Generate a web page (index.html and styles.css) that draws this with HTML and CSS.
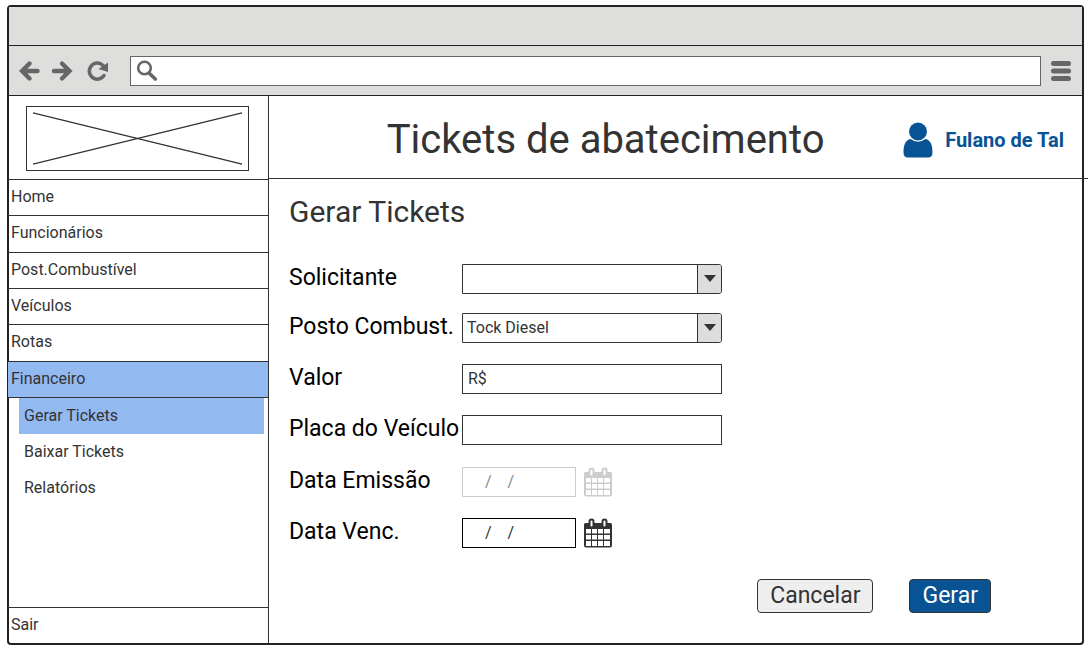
FILE: index.html
```html
<!DOCTYPE html>
<html lang="pt-BR">
<head>
<meta charset="utf-8">
<meta name="viewport" content="width=device-width, initial-scale=1">
<title>Tickets de abatecimento</title>
<link rel="stylesheet" href="styles.css">
</head>
<body>
<svg class="sprite" aria-hidden="true">
  <symbol id="calendar" viewBox="0 0 30 32">
    <path fill="currentColor" fill-rule="evenodd" d="M2.500 6H5.500V4.500a3 3 0 0 1 6 0V6h7V4.500a3 3 0 0 1 6 0V6h3A1.500 1.500 0 0 1 29 7.500v21a2 2 0 0 1-2 2H3a2 2 0 0 1-2-2v-21A1.500 1.500 0 0 1 2.500 6z"/>
    <path fill="#fff" d="M3 12h5v4.500H3zM9 12h5v4.500H9zM15 12h5v4.500h-5zM21 12h6v4.500h-6zM3 18h5v4.500H3zM9 18h5v4.500H9zM15 18h5v4.500h-5zM21 18h6v4.500h-6zM3 24h5v5H3zM9 24h5v5H9zM15 24h5v5h-5zM21 24h6v5h-6z"/>
    <path fill="none" stroke="#fff" stroke-width="2" stroke-linecap="round" d="M8.500 4.500v4M21.500 4.500v4"/>
  </symbol>
  <symbol id="caret" viewBox="0 0 12 8">
    <path fill="#333" d="M0 0h12L6 7z"/>
  </symbol>
</svg>

<div class="window">
  <div class="titlebar"></div>
  <div class="toolbar">
    <div class="history">
      <button class="tool" type="button" aria-label="Voltar">
        <svg width="22" height="22" viewBox="0 0 22 22"><path d="M18.500 11H4M10.500 3.500L3 11l7.500 7.500" fill="none" stroke="#666" stroke-width="4.400" stroke-linecap="round"/></svg>
      </button>
      <button class="tool" type="button" aria-label="Avançar">
        <svg width="22" height="22" viewBox="0 0 22 22"><path d="M3 11h14.500M11 3.500l7.500 7.500-7.500 7.500" fill="none" stroke="#666" stroke-width="4.400" stroke-linecap="round"/></svg>
      </button>
      <button class="tool tool-reload" type="button" aria-label="Recarregar">
        <svg width="22" height="22" viewBox="0 0 22 22"><path d="M17 15.500A8 8 0 1 1 16 5.500" fill="none" stroke="#666" stroke-width="3.500" stroke-linecap="round"/><path d="M21 2.500v9.500l-9.500-3z" fill="#666"/></svg>
      </button>
    </div>
    <label class="address">
      <svg width="22" height="22" viewBox="0 0 22 22"><circle cx="8.500" cy="8" r="6.300" fill="none" stroke="#666" stroke-width="2.600"/><path d="M13 13l6.300 6" stroke="#666" stroke-width="3.600" stroke-linecap="round"/></svg>
      <input class="address-input" type="text" aria-label="Endereço">
    </label>
    <button class="tool" type="button" aria-label="Menu">
      <svg width="22" height="22" viewBox="0 0 22 22"><path d="M3.500 3.500h15M3.500 11h15M3.500 18.500h15" stroke="#666" stroke-width="5" stroke-linecap="round"/></svg>
    </button>
  </div>

  <div class="page">
    <aside class="sidebar">
      <div class="brand">
        <svg class="logo" viewBox="0 0 223 65" preserveAspectRatio="none" role="img" aria-label="Logo"><path d="M6 6l211 53M6 59L217 6" stroke="#333" stroke-width="1.200"/></svg>
      </div>
      <nav class="menu">
        <a class="menu-item" href="#">Home</a>
        <a class="menu-item" href="#">Funcionários</a>
        <a class="menu-item" href="#">Post.Combustível</a>
        <a class="menu-item" href="#">Veículos</a>
        <a class="menu-item" href="#">Rotas</a>
        <a class="menu-item active" href="#">Financeiro</a>
      </nav>
      <nav class="submenu">
        <a class="submenu-item active" href="#">Gerar Tickets</a>
        <a class="submenu-item" href="#">Baixar Tickets</a>
        <a class="submenu-item" href="#">Relatórios</a>
      </nav>
      <a class="menu-item logout" href="#">Sair</a>
    </aside>

    <div class="main">
      <header class="header">
        <h1 class="title">Tickets de abatecimento</h1>
        <a class="user" href="#">
          <svg width="30" height="36" viewBox="0 0 30 36"><circle cx="15" cy="9.500" r="9" fill="#085394"/><path d="M7.500 17q7.500 5.500 15 0C27.500 18 29.500 23 29.500 30.500q0 5-4.500 5H5q-4.500 0-4.500-5C.5 23 2.500 18 7.500 17z" fill="#085394"/></svg>
          Fulano de Tal
        </a>
      </header>

      <main class="content">
        <h2 class="subtitle">Gerar Tickets</h2>
        <form class="form">
          <div class="group group-selects">
            <div class="field">
              <label for="solicitante">Solicitante</label>
              <div class="select">
                <select id="solicitante"><option></option></select>
                <span class="select-arrow"><svg width="12" height="8"><use href="#caret"/></svg></span>
              </div>
            </div>
            <div class="field">
              <label for="posto">Posto Combust.</label>
              <div class="select">
                <select id="posto"><option>Tock Diesel</option></select>
                <span class="select-arrow"><svg width="12" height="8"><use href="#caret"/></svg></span>
              </div>
            </div>
          </div>
          <div class="group">
            <div class="field">
              <label for="valor">Valor</label>
              <input class="text" id="valor" type="text" value="R$">
            </div>
            <div class="field">
              <label for="placa">Placa do Veículo</label>
              <input class="text" id="placa" type="text">
            </div>
          </div>
          <div class="group">
            <div class="field">
              <label for="emissao">Data Emissão</label>
              <div class="date">
                <input class="text date-input" id="emissao" type="text" value="/    /" disabled>
                <button class="pick" type="button" aria-label="Calendário de emissão" disabled><svg width="30" height="32"><use href="#calendar"/></svg></button>
              </div>
            </div>
            <div class="field">
              <label for="vencimento">Data Venc.</label>
              <div class="date">
                <input class="text date-input" id="vencimento" type="text" value="/    /">
                <button class="pick" type="button" aria-label="Calendário de vencimento"><svg width="30" height="32"><use href="#calendar"/></svg></button>
              </div>
            </div>
          </div>
          <div class="actions">
            <button class="button" type="button">Cancelar</button>
            <button class="button primary" type="submit">Gerar</button>
          </div>
        </form>
      </main>
    </div>
  </div>
</div>
</body>
</html>
```
FILE: styles.css
```css
* {
  box-sizing: border-box;
}

body {
  margin: 0;
  min-height: 100vh;
  padding: 5px 4px 5px 7px;
  display: flex;
  overflow-x: hidden;
  background: #fff;
  color: #333;
  font-family: Roboto, "Liberation Sans", sans-serif;
  font-size: 16px;
}

a {
  color: inherit;
  text-decoration: none;
}

button,
input,
select {
  margin: 0;
  font: inherit;
  color: inherit;
}

svg {
  display: block;
  flex: none;
}

.sprite {
  position: absolute;
  width: 0;
  height: 0;
}

.window {
  flex: 1;
  display: flex;
  flex-direction: column;
  border: 2px solid #222;
  border-radius: 4px;
}

.titlebar {
  height: 39px;
  background: #dededd;
  border-bottom: 1px solid #222;
}

.toolbar {
  display: flex;
  align-items: center;
  gap: 9px;
  height: 50px;
  padding: 0 10px;
  background: #dededd;
  border-bottom: 1px solid #222;
}

.history {
  display: flex;
  gap: 10px;
  margin-right: 12px;
}

.tool {
  padding: 0;
  border: 0;
  background: none;
}

.tool-reload {
  margin-left: 4px;
}

.address {
  flex: 1;
  display: flex;
  align-items: center;
  gap: 6px;
  height: 30px;
  padding: 0 5px;
  background: #fff;
  border: 1px solid #666;
}

.address-input {
  flex: 1;
  min-width: 0;
  border: 0;
  outline: 0;
  background: none;
}

.page {
  flex: 1;
  display: flex;
}

.sidebar {
  display: flex;
  flex-direction: column;
  width: 261px;
  margin-left: -1px;
  border-right: 1px solid #333;
}

.brand {
  height: 83px;
  padding: 10px 19px 8px 18px;
}

.logo {
  width: 100%;
  height: 65px;
  border: 1px solid #333;
}

.menu {
  display: grid;
  grid-auto-rows: 1fr;
  min-height: 218px;
}

.menu-item {
  display: flex;
  align-items: center;
  min-height: 36px;
  padding: 0 4px 2px 3px;
  border-top: 1px solid #333;
}

.active {
  background: #93b9f1;
}

.submenu {
  border-top: 1px solid #333;
}

.submenu-item {
  display: flex;
  align-items: center;
  height: 36px;
  margin: 0 4px 0 11px;
  padding: 0 5px 2px;
}

.logout {
  margin-top: auto;
}

.main {
  flex: 1;
  display: flex;
  flex-direction: column;
  min-width: 0;
}

.header {
  display: flex;
  align-items: center;
  height: 83px;
  margin-right: -6px;
  padding: 5px 24px 0 39px;
  border-bottom: 1px solid #333;
}

.title {
  flex: 1;
  margin: 0;
  font-size: 40px;
  font-weight: 400;
  text-align: center;
}

.user {
  display: flex;
  align-items: center;
  gap: 12px;
  color: #085394;
  font-size: 20px;
  font-weight: 700;
}

.content {
  padding: 15px 20px 20px;
}

.subtitle {
  margin: 0 0 34px;
  font-size: 30px;
  line-height: 36px;
  font-weight: 400;
}

.form {
  display: grid;
  gap: 21px;
}

.group {
  display: grid;
  gap: 21px;
}

.group-selects {
  gap: 19px;
}

.field {
  display: grid;
  grid-template-columns: 173px minmax(0, 260px);
  align-items: center;
  height: 30px;
}

.field label {
  padding-bottom: 2px;
  color: #000;
  font-size: 23px;
  line-height: 28px;
  white-space: nowrap;
}

.text {
  width: 100%;
  height: 30px;
  padding: 0 5px 2px;
  background: #fff;
  border: 1px solid #333;
}

.select {
  position: relative;
}

.select select {
  width: 100%;
  height: 30px;
  padding: 0 28px 2px 4px;
  appearance: none;
  background: #fff;
  border: 1px solid #333;
  border-radius: 0 3px 3px 0;
}

.select-arrow {
  position: absolute;
  top: 1px;
  right: 1px;
  bottom: 1px;
  width: 24px;
  display: grid;
  place-items: center;
  background: #ddd;
  border-left: 1px solid #333;
  border-radius: 0 2px 2px 0;
  pointer-events: none;
}

.date {
  display: flex;
  align-items: center;
  gap: 7px;
}

.date-input {
  width: 114px;
  padding: 0 22px 2px;
  border-color: #000;
}

.date-input:disabled {
  border-color: #ccc;
  color: #888;
}

.pick {
  padding: 0;
  border: 0;
  background: none;
  color: #333;
}

.pick:disabled {
  color: #ccc;
}

.actions {
  display: flex;
  justify-content: flex-end;
  gap: 36px;
  margin-top: 11px;
  padding-right: 71px;
}

.button {
  height: 34px;
  padding: 0 12px;
  background: #eee;
  border: 1px solid #333;
  border-radius: 4px;
  font-size: 23px;
  line-height: 28px;
}

.primary {
  background: #085394;
  color: #fff;
}
```
